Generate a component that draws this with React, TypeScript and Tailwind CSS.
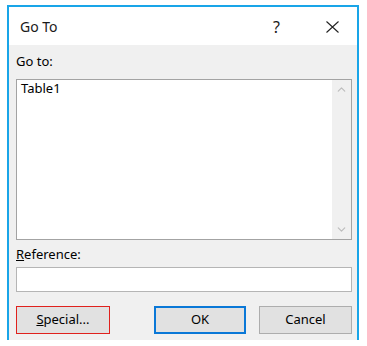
import { ChevronUp, ChevronDown } from "lucide-react";

export default function App() {
  return (
    <div
      className="w-[367px] h-[346px] bg-white pt-[5px] pl-[7px]"
      style={{ fontFamily: '"Noto Sans", "Open Sans", sans-serif' }}
    >
      <div className="w-[352px] h-[335px] border-2 border-[#19a5e8] flex flex-col">
        {/* title bar */}
        <div className="h-[38px] bg-white flex items-center pl-[11px] pt-[1px] shrink-0">
          <span className="text-[14px] text-[#1a1a1a] flex-1">Go To</span>
          <span className="text-[16px] text-[#1a1a1a] mr-[46px]">?</span>
          <svg width="13" height="12" viewBox="0 0 13 12" className="mr-[18px]">
            <path d="M0.5 0.5 L12.5 11.5 M12.5 0.5 L0.5 11.5" stroke="#222" strokeWidth="1.1" fill="none" />
          </svg>
        </div>

        {/* body */}
        <div className="flex-1 bg-[#f0f0f0] pl-[7px] pr-[5px] pt-[8px] pb-[6px] flex flex-col text-[13px] text-black">
          <div className="h-[17px] leading-[17px]">Go to:</div>
          <div className="mt-[9px] h-[161px] border border-[#a3a3a3] bg-white flex">
            <div className="flex-1 pl-[4px] leading-[17px]">Table1</div>
            <div className="w-[19px] bg-[#f0f0f0] flex flex-col items-center justify-between py-[3px]">
              <ChevronUp className="w-[13px] h-[13px] text-[#bdbdbd]" strokeWidth={2.2} />
              <ChevronDown className="w-[13px] h-[13px] text-[#bdbdbd]" strokeWidth={2.2} />
            </div>
          </div>
          <div className="mt-[6px] h-[17px] leading-[17px]">
            <span className="underline">R</span>eference:
          </div>
          <div className="mt-[4px] h-[25px] border border-[#b5b5b5] bg-white"></div>
          <div className="mt-[14px] flex items-center">
            <button className="w-[94px] h-[28px] bg-[#e1e1e1] border border-[#e0211d] text-[13px]">
              <span className="underline">S</span>pecial...
            </button>
            <button className="ml-[44px] w-[92px] h-[28px] bg-[#e1e1e1] border-2 border-[#0a78d7] text-[13px]">
              OK
            </button>
            <button className="ml-[13px] w-[93px] h-[28px] bg-[#e1e1e1] border border-[#adadad] text-[13px]">
              Cancel
            </button>
          </div>
        </div>
      </div>
    </div>
  );
}
